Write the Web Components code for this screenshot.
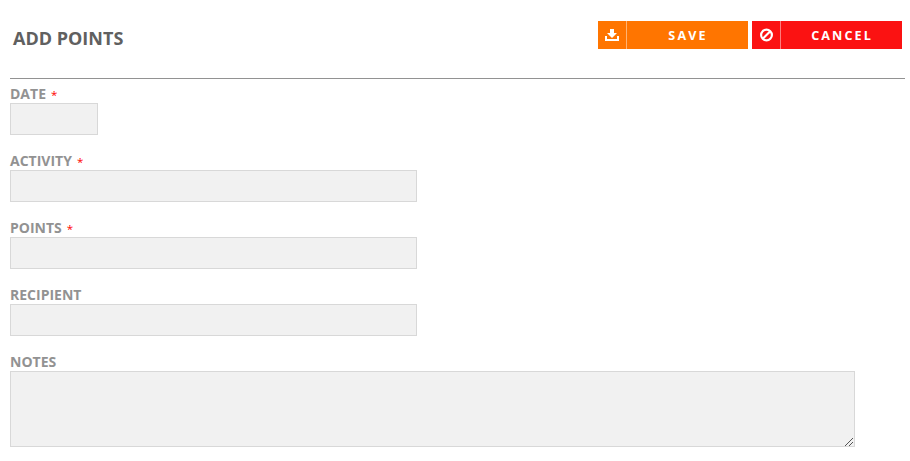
<!DOCTYPE html>
<html lang="en">
<head>
<meta charset="utf-8">
<title>Add Points</title>
<style>
body { margin: 0; background: #fff; font-family: "Open Sans", "Noto Sans", sans-serif; }
</style>
</head>
<body>
<points-page></points-page>
<script>
class IconButton extends HTMLElement {
  connectedCallback() {
    this.attachShadow({ mode: 'open' }).innerHTML = `
      <style>
        :host { display: block; width: 150px; height: 28px; }
        button { display: flex; width: 100%; height: 100%; padding: 0; border: 0; color: #fff;
          background: var(--button-color); font: 700 12.6px/28px "Open Sans", "Noto Sans", sans-serif; letter-spacing: 2.1px; }
        .icon { box-sizing: border-box; width: 29px; height: 28px; border-right: 1px solid rgba(255,255,255,.45); }
        .label { flex: 1; text-align: center; padding: 1px 0 0 1px; }
        ::slotted(svg) { display: block; width: 28px; height: 28px; }
      </style>
      <button type="button"><span class="icon"><slot name="icon"></slot></span><span class="label"><slot></slot></span></button>`;
  }
}
customElements.define('icon-button', IconButton);

class FormField extends HTMLElement {
  connectedCallback() {
    const required = this.hasAttribute('required') ? '<span class="star">*</span>' : '';
    const control = this.hasAttribute('multiline')
      ? '<div class="area"><textarea id="c"></textarea><svg width="9" height="9" viewBox="0 0 9 9" shape-rendering="crispEdges"><path d="M0 8h1v1h-1zM1 7h1v1h-1zM2 6h1v1h-1zM3 5h1v1h-1zM4 4h1v1h-1zM5 3h1v1h-1zM6 2h1v1h-1zM7 1h1v1h-1zM4 8h1v1h-1zM5 7h1v1h-1zM6 6h1v1h-1zM7 5h1v1h-1z" fill="#555"/></svg></div>'
      : '<input id="c" type="text">';
    this.attachShadow({ mode: 'open' }).innerHTML = `
      <style>
        :host { display: block; width: var(--field-width, 407px); }
        label { display: block; height: 19px; font: 700 14px/19px "Open Sans", "Noto Sans", sans-serif; color: #929292; white-space: nowrap; }
        .star { margin-left: 5px; color: #f00; font-weight: 400; font-size: 11.5px; line-height: 1; vertical-align: 0; }
        input, textarea { display: block; box-sizing: border-box; width: 100%; height: 32px; margin: 0; padding: 4px;
          border: 1px solid #d8d8d8; border-radius: 0; background: #f1f1f1; outline: 0; resize: none; }
        textarea { height: 76px; }
        .area { position: relative; }
        svg { position: absolute; right: 1px; bottom: 1px; }
      </style>
      <label for="c"><slot></slot>${required}</label>${control}`;
  }
}
customElements.define('form-field', FormField);

class PointsPage extends HTMLElement {
  connectedCallback() {
    this.attachShadow({ mode: 'open' }).innerHTML = `
      <style>
        :host { display: block; padding: 0 5px 0 10px; }
        header { display: flex; justify-content: space-between; align-items: flex-start; box-sizing: border-box;
          height: 79px; padding: 21px 3px 0; border-bottom: 1px solid #929292; }
        h1 { margin: 5px 0 0; font-size: 18px; line-height: 25px; font-weight: 700; color: #606060; }
        .actions { display: flex; gap: 4px; }
        form { display: flex; flex-direction: column; gap: 16px; padding-top: 5px; }
      </style>
      <header>
        <h1>ADD POINTS</h1>
        <div class="actions">
          <icon-button style="--button-color:#ff7500">
            <svg slot="icon" viewBox="0 0 28 28" fill="#fff"><path d="M12 8h4v4h3l-5 5-5-5h3zM7 15h2v3h10v-3h2v5H7z"/></svg>SAVE</icon-button>
          <icon-button style="--button-color:#fb1212">
            <svg slot="icon" viewBox="0 0 28 28" fill="none" stroke="#fff" stroke-width="2.2"><circle cx="14.5" cy="14" r="5.4"/><path d="M10.7 17.8l7.6-7.6"/></svg>CANCEL</icon-button>
        </div>
      </header>
      <form>
        <form-field required style="--field-width:88px">DATE</form-field>
        <form-field required>ACTIVITY</form-field>
        <form-field required>POINTS</form-field>
        <form-field>RECIPIENT</form-field>
        <form-field multiline style="--field-width:845px">NOTES</form-field>
      </form>`;
  }
}
customElements.define('points-page', PointsPage);
</script>
</body>
</html>
